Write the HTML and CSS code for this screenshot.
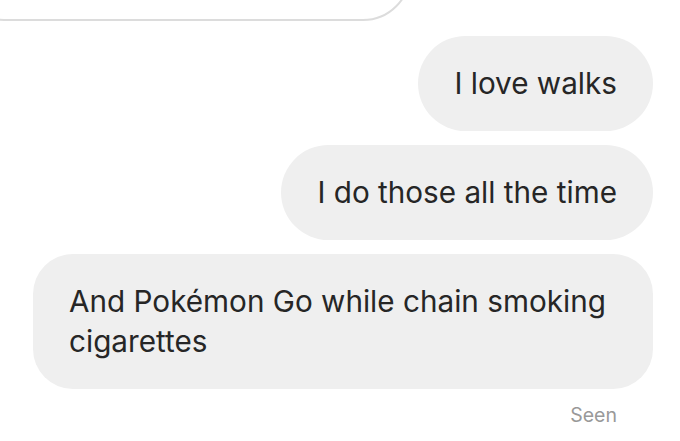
FILE: index.html
```html
<!DOCTYPE html>
<html lang="en">
<head>
	<meta charset="UTF-8">
	<title>Chat</title>
<link rel="stylesheet" href="styles.css">
</head>
<body>
	<div class='thread'>
		<div class='threadTop'>
			<div class='bubble bubble-in'></div>
		</div>
		<div class='row'><div class='bubble bubble-out'>I love walks</div></div>
		<div class='row'><div class='bubble bubble-out'>I do those all the time</div></div>
		<div class='row'><div class='bubble bubble-out wide'>And Pokémon Go while chain smoking cigarettes</div></div>
		<div class='seen'>Seen</div>
	</div>
</body>
</html>
```

FILE: styles.css
```css
body{
	margin:0;
	background:#fff;
	font-family: Inter, "Noto Sans", sans-serif;
	color:#262626;
}
.thread{
	display:flex;
	flex-direction:column;
	gap:14px;
	padding-right:27px;
}
.threadTop{
	height:21px;
	overflow:hidden;
	display:flex;
	align-items:flex-end;
	margin-bottom:1px;
}
.bubble-in{
	flex:none;
	width:455px;height:96px;
	margin-left:-44px;
	border:2px solid #dcdcdc;
	border-radius:48px;
	box-sizing:border-box;
}
.row{
	display:flex;
	justify-content:flex-end;
}
.bubble-out{
	background:#efefef;
	border-radius:48px;
	padding:27px 36px 28px;
	font-size:29.7px;
	line-height:40px;
}
.bubble-out.wide{
	width:548px;
	border-radius:40px;
}
.seen{
	align-self:flex-end;
	margin:0 36px 0 0;
	font-size:19.5px;
	color:#999;
}
```
